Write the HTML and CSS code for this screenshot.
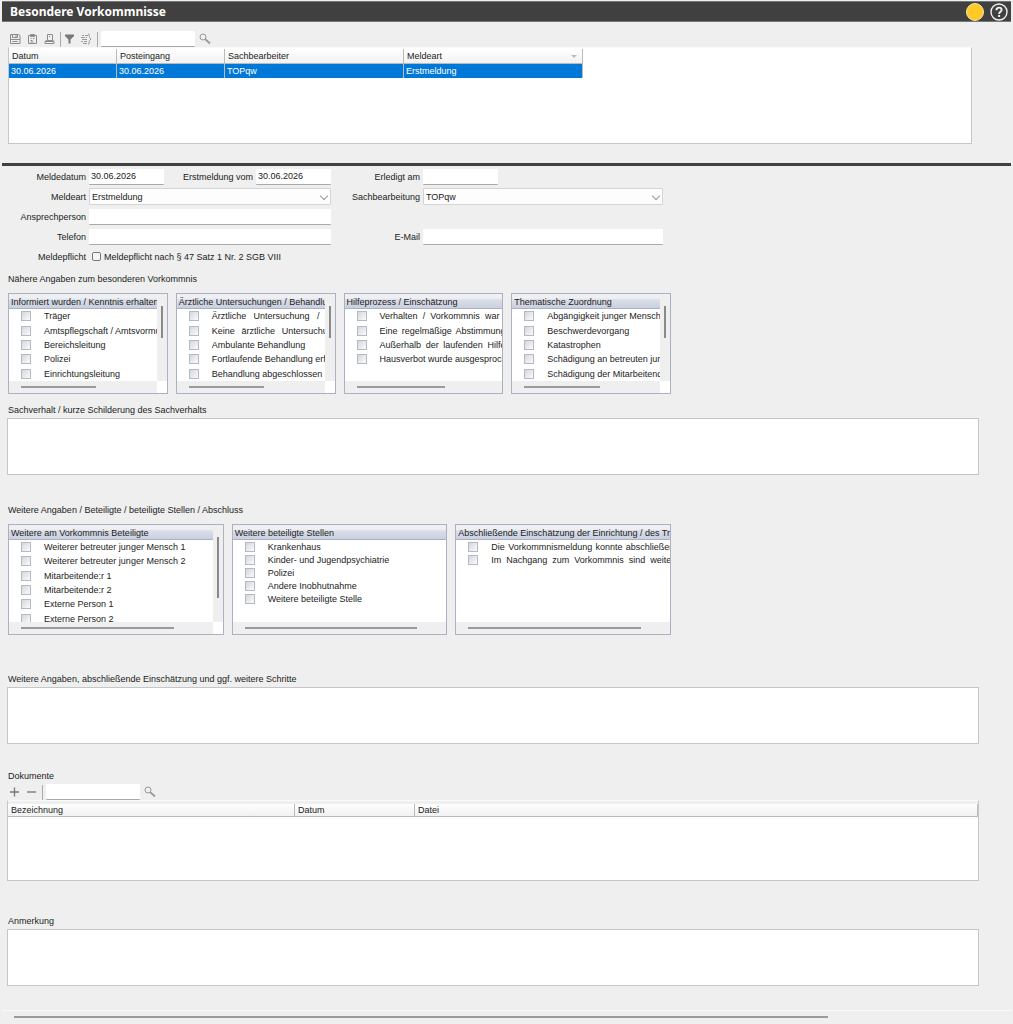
FILE: index.html
```html
<!DOCTYPE html>
<html lang="de">
<head>
    <meta charset="UTF-8">
    <meta name="viewport" content="width=device-width, initial-scale=1.0">
    <title>Besondere Vorkommnisse</title>
    <link rel="stylesheet" href="styles.css">
</head>
<body>
    <header class="titlebar">
        <h1>Besondere Vorkommnisse</h1>
        <span class="status"></span>
        <button class="help" aria-label="Hilfe">
            <svg width="18" height="18" viewBox="0 0 18 18" fill="none" stroke="#efefef">
                <circle cx="9" cy="9" r="8" stroke-width="1.4"/>
                <path d="M6.4 7.2C6.4 5.5 7.5 4.6 9 4.6s2.6.9 2.6 2.3c0 1.8-2.5 1.9-2.5 4" stroke-width="1.9"/>
                <path d="M9.1 12v2" stroke-width="2"/>
            </svg>
        </button>
    </header>

    <section class="overview">
        <div class="toolbar">
            <button class="tool" aria-label="Speichern">
                <svg width="11" height="12" viewBox="0 0 11 12" fill="none" stroke="#8c8c8c"><path d="M.5 1.5h8l1.500 1v8H.5zM2.500 2v2.500h5V2M.5 6.500h9.500M2.500 8.500h5"/><path d="M6 2v2"/></svg>
            </button>
            <button class="tool" aria-label="Einfügen">
                <svg width="11" height="12" viewBox="0 0 11 12" fill="none" stroke="#8c8c8c"><path d="M1.5 2.5h8v8h-8z"/><path d="M3.5 1.5h4v2h-4zM3.5 5.5h1M6 5.5h1.5M3.5 7.5h2M3.5 9h3"/></svg>
            </button>
            <button class="tool" aria-label="Drucken">
                <svg width="11" height="12" viewBox="0 0 11 12" fill="none" stroke="#8c8c8c"><path d="M3.5 7.5v-6h5v6zM3.5 7L1 8.5v2h9v-2L8.500 7M1 8.500h9M5 3.500h1"/></svg>
            </button>
            <span class="separator"></span>
            <button class="tool" aria-label="Filter">
                <svg width="11" height="12" viewBox="0 0 11 12" fill="#777"><path d="M1 1.5h9V3L6.5 6.5v4h-2v-4L1 3z"/></svg>
            </button>
            <button class="tool" aria-label="Filter anpassen">
                <svg width="11" height="12" viewBox="0 0 11 12" fill="none" stroke="#999"><path d="M1 2.5h2M4 2.5h3M0 4.5h4M5 4.5h1M1 6.5h5M0 8.5h2M3 8.5h3M2 10.5h4M7 1c2 0 1 2 1.5 3.5L10 6 8.5 7.5C8 9 9 11 7 11"/></svg>
            </button>
            <span class="separator"></span>
            <input type="text" class="search" aria-label="Suche">
            <button class="tool" aria-label="Suchen">
                <svg width="12" height="12" viewBox="0 0 12 12" fill="none" stroke="#999"><circle cx="4" cy="4" r="3"/><path d="M6 6l5 4.5" stroke-width="1.8"/></svg>
            </button>
        </div>
        <div class="table-box reports">
            <table>
                <colgroup>
                    <col class="col-date"><col class="col-date"><col class="col-wide"><col class="col-wide">
                </colgroup>
                <thead>
                    <tr><th>Datum</th><th>Posteingang</th><th>Sachbearbeiter</th><th class="sorted">Meldeart</th></tr>
                </thead>
                <tbody>
                    <tr class="selected"><td>30.06.2026</td><td>30.06.2026</td><td>TOPqw</td><td>Erstmeldung</td></tr>
                </tbody>
            </table>
        </div>
    </section>

    <main>
        <form class="details">
            <label for="meldedatum">Meldedatum</label>
            <div class="dates">
                <input type="text" id="meldedatum" class="date" value="30.06.2026">
                <label for="erstmeldung">Erstmeldung vom</label>
                <input type="text" id="erstmeldung" class="date" value="30.06.2026">
            </div>
            <label for="erledigt">Erledigt am</label>
            <input type="text" id="erledigt" class="date">

            <label for="meldeart">Meldeart</label>
            <div class="select">
                <select id="meldeart"><option>Erstmeldung</option></select>
            </div>
            <label for="bearbeitung">Sachbearbeitung</label>
            <div class="select">
                <select id="bearbeitung"><option>TOPqw</option></select>
            </div>

            <label for="person">Ansprechperson</label>
            <input type="text" id="person">

            <label for="telefon" class="first">Telefon</label>
            <input type="text" id="telefon">
            <label for="email">E-Mail</label>
            <input type="text" id="email">

            <span class="first">Meldepflicht</span>
            <label class="duty"><input type="checkbox">Meldepflicht nach § 47 Satz 1 Nr. 2 SGB VIII</label>
        </form>

        <h2>Nähere Angaben zum besonderen Vorkommnis</h2>
        <div class="panels four">
            <section class="panel">
                <div class="panel-top">
                    <div class="panel-main">
                        <h3>Informiert wurden / Kenntnis erhalten</h3>
                        <div class="checks">
                            <label><input type="checkbox"><span>Träger</span></label>
                            <label><input type="checkbox"><span>Amtspflegschaft / Amtsvormund</span></label>
                            <label><input type="checkbox"><span>Bereichsleitung</span></label>
                            <label><input type="checkbox"><span>Polizei</span></label>
                            <label><input type="checkbox"><span>Einrichtungsleitung</span></label>
                        </div>
                    </div>
                    <div class="vbar"><i></i></div>
                </div>
                <div class="hbar corner"><i></i></div>
            </section>
            <section class="panel">
                <div class="panel-top">
                    <div class="panel-main">
                        <h3>Ärztliche Untersuchungen / Behandlung</h3>
                        <div class="checks">
                            <label><input type="checkbox"><span class="block">Ärztliche Untersuchung / Be</span></label>
                            <label><input type="checkbox"><span class="block">Keine ärztliche Untersuchung</span></label>
                            <label><input type="checkbox"><span>Ambulante Behandlung</span></label>
                            <label><input type="checkbox"><span>Fortlaufende Behandlung erfolgt</span></label>
                            <label><input type="checkbox"><span>Behandlung abgeschlossen</span></label>
                        </div>
                    </div>
                    <div class="vbar"><i></i></div>
                </div>
                <div class="hbar corner"><i></i></div>
            </section>
            <section class="panel">
                <div class="panel-top">
                    <div class="panel-main">
                        <h3>Hilfeprozess / Einschätzung</h3>
                        <div class="checks">
                            <label><input type="checkbox"><span class="block short">Verhalten / Vorkommnis war</span></label>
                            <label><input type="checkbox"><span class="block">Eine regelmäßige Abstimmung</span></label>
                            <label><input type="checkbox"><span class="block">Außerhalb der laufenden Hilfe</span></label>
                            <label><input type="checkbox"><span>Hausverbot wurde ausgesprochen</span></label>
                        </div>
                    </div>
                </div>
                <div class="hbar"><i></i></div>
            </section>
            <section class="panel">
                <div class="panel-top">
                    <div class="panel-main">
                        <h3>Thematische Zuordnung</h3>
                        <div class="checks">
                            <label><input type="checkbox"><span>Abgängigkeit junger Menschen</span></label>
                            <label><input type="checkbox"><span>Beschwerdevorgang</span></label>
                            <label><input type="checkbox"><span>Katastrophen</span></label>
                            <label><input type="checkbox"><span>Schädigung an betreuten jungen</span></label>
                            <label><input type="checkbox"><span>Schädigung der Mitarbeitenden</span></label>
                        </div>
                    </div>
                    <div class="vbar"><i></i></div>
                </div>
                <div class="hbar corner"><i></i></div>
            </section>
        </div>

        <label class="caption" for="sachverhalt">Sachverhalt / kurze Schilderung des Sachverhalts</label>
        <textarea id="sachverhalt"></textarea>

        <h2 class="spaced">Weitere Angaben / Beteiligte / beteiligte Stellen / Abschluss</h2>
        <div class="panels three">
            <section class="panel">
                <div class="panel-top">
                    <div class="panel-main">
                        <h3>Weitere am Vorkommnis Beteiligte</h3>
                        <div class="checks six">
                            <label><input type="checkbox"><span>Weiterer betreuter junger Mensch 1</span></label>
                            <label><input type="checkbox"><span>Weiterer betreuter junger Mensch 2</span></label>
                            <label><input type="checkbox"><span>Mitarbeitende:r 1</span></label>
                            <label><input type="checkbox"><span>Mitarbeitende:r 2</span></label>
                            <label><input type="checkbox"><span>Externe Person 1</span></label>
                            <label><input type="checkbox"><span>Externe Person 2</span></label>
                        </div>
                    </div>
                    <div class="vbar"><i></i></div>
                </div>
                <div class="hbar corner"><i></i></div>
            </section>
            <section class="panel">
                <div class="panel-top">
                    <div class="panel-main">
                        <h3>Weitere beteiligte Stellen</h3>
                        <div class="checks dense">
                            <label><input type="checkbox"><span>Krankenhaus</span></label>
                            <label><input type="checkbox"><span>Kinder- und Jugendpsychiatrie</span></label>
                            <label><input type="checkbox"><span>Polizei</span></label>
                            <label><input type="checkbox"><span>Andere Inobhutnahme</span></label>
                            <label><input type="checkbox"><span>Weitere beteiligte Stelle</span></label>
                        </div>
                    </div>
                </div>
                <div class="hbar"><i></i></div>
            </section>
            <section class="panel">
                <div class="panel-top">
                    <div class="panel-main">
                        <h3>Abschließende Einschätzung der Einrichtung / des Trägers</h3>
                        <div class="checks dense">
                            <label><input type="checkbox"><span class="block long">Die Vorkommnismeldung konnte abschließend</span></label>
                            <label><input type="checkbox"><span class="block long">Im Nachgang zum Vorkommnis sind weitere</span></label>
                        </div>
                    </div>
                </div>
                <div class="hbar"><i></i></div>
            </section>
        </div>

        <label class="caption spaced" for="weitere">Weitere Angaben, abschließende Einschätzung und ggf. weitere Schritte</label>
        <textarea id="weitere"></textarea>

        <h2 class="documents-title">Dokumente</h2>
        <div class="toolbar">
            <button class="tool" aria-label="Hinzufügen">
                <svg width="11" height="12" viewBox="0 0 11 12" stroke="#777" stroke-width="1.3"><path d="M1 6h9M5.5 1.5v9"/></svg>
            </button>
            <button class="tool" aria-label="Entfernen">
                <svg width="11" height="12" viewBox="0 0 11 12" stroke="#777" stroke-width="1.3"><path d="M1 6h9"/></svg>
            </button>
            <span class="separator"></span>
            <input type="text" class="search" aria-label="Dokumente suchen">
            <button class="tool" aria-label="Suchen">
                <svg width="12" height="12" viewBox="0 0 12 12" fill="none" stroke="#999"><circle cx="4" cy="4" r="3"/><path d="M6 6l5 4.5" stroke-width="1.8"/></svg>
            </button>
        </div>
        <div class="table-box documents">
            <table>
                <colgroup>
                    <col class="col-name"><col class="col-day"><col>
                </colgroup>
                <thead>
                    <tr><th>Bezeichnung</th><th>Datum</th><th>Datei</th></tr>
                </thead>
            </table>
        </div>

        <label class="caption remark" for="anmerkung">Anmerkung</label>
        <textarea id="anmerkung"></textarea>
    </main>

    <footer class="page-scroll"><i></i></footer>
</body>
</html>
```
FILE: styles.css
```css
* {
    box-sizing: border-box;
}

body {
    margin: 0;
    padding: 1px 2px 0;
    background-color: #efefef;
    color: #222;
    font-family: "Liberation Sans", Arial, sans-serif;
    font-size: 9px;
    line-height: 12px;
}

input, select, textarea, button {
    font: inherit;
    color: inherit;
}

h2, h3 {
    margin: 0;
    font-size: 9px;
    font-weight: normal;
}

/* title bar */
.titlebar {
    display: flex;
    align-items: center;
    gap: 6px;
    height: 21px;
    padding: 0 3px 0 8px;
    background-color: #404040;
    border: 1px solid #777;
    border-width: 1px 0;
}

.titlebar h1 {
    flex: 1;
    margin: 0;
    color: #fff;
    font: bold 12px "Noto Sans", sans-serif;
}

.status {
    width: 18px;
    height: 18px;
    border: 1px solid #f5e6b0;
    border-radius: 50%;
    background-color: #ffca28;
}

.help {
    display: flex;
    padding: 0;
    border: none;
    background: none;
}

/* toolbars */
.toolbar {
    display: flex;
    align-items: center;
    gap: 4px;
    height: 16px;
    padding-left: 2px;
}

.tool {
    display: flex;
    padding: 0;
    margin-right: 2px;
    border: none;
    background: none;
}

.separator {
    width: 1px;
    height: 15px;
    margin: 0 -1px;
    background-color: #aaa;
}

.search {
    width: 94px;
}

input[type="text"] {
    height: 16px;
    padding: 0 2px;
    border: none;
    border-bottom: 1px solid #aaa;
    border-radius: 1px;
    background-color: #fff;
}

/* tables */
.overview {
    padding: 9px 39px 19px 6px;
    border-bottom: 3px solid #404040;
}

.table-box {
    background-color: #fff;
    border: 1px solid #c4c6ca;
    border-top-color: #fafafa;
}

.reports {
    height: 97px;
    padding-top: 1px;
}

.documents {
    height: 81px;
    padding-top: 3px;
    background: linear-gradient(#efefef 3px, #fff 3px);
}

table {
    border-spacing: 0;
    table-layout: fixed;
    width: 574px;
}

.documents table {
    width: 100%;
}

.col-date {
    width: 108px;
}

.col-wide {
    width: 179px;
}

.col-name {
    width: 287px;
}

.col-day {
    width: 120px;
}

th, td {
    height: 14px;
    padding: 0 3px;
    border-right: 1px solid #bbb;
    text-align: left;
    font-weight: normal;
}

td {
    padding-left: 2px;
}

th {
    height: 15px;
    background: linear-gradient(#fff, #f1f1f1);
    border-bottom: 1px solid #bbb;
}

.documents th {
    height: 13px;
}

.selected {
    background-color: #0078d7;
    color: #fff;
}

.sorted::after {
    content: "";
    float: right;
    margin: 5px 2px 0 0;
    border: 3px solid transparent;
    border-top-color: #bbb;
    border-bottom: none;
}

/* form */
main {
    padding: 2px 32px 0 5px;
}

.details {
    display: grid;
    grid-template-columns: 79px 242px 86px 240px;
    grid-auto-rows: 17px;
    gap: 3px;
    align-items: center;
}

.details > label, .first {
    text-align: right;
}

.first {
    grid-column: 1;
}

.dates {
    display: flex;
    align-items: center;
    justify-content: space-between;
}

.dates label {
    flex: 1;
    padding-right: 3px;
    text-align: right;
}

.details .date {
    width: 75px;
}

.select {
    position: relative;
    display: flex;
}

.select::after {
    content: "";
    position: absolute;
    right: 4px;
    top: 5px;
    width: 5px;
    height: 5px;
    border: solid #999;
    border-width: 0 1px 1px 0;
    transform: rotate(45deg);
    pointer-events: none;
}

select {
    appearance: none;
    width: 100%;
    height: 17px;
    padding: 0 2px;
    border: 1px solid #d4d4d4;
    border-radius: 1px;
    background-color: #fdfdfd;
}

.details .duty {
    display: flex;
    align-items: center;
    gap: 3px;
    white-space: nowrap;
}

input[type="checkbox"] {
    appearance: none;
    flex: none;
    width: 10px;
    height: 10px;
    margin: 0;
    border: 1px solid #b4b9c4;
    background: linear-gradient(135deg, #d4d7dd, #fbfbfb);
}

.duty input[type="checkbox"] {
    width: 9px;
    height: 9px;
    margin-left: 3px;
    border-color: #777;
    border-radius: 2px;
    background: #f6f6f6;
}

h2, .caption {
    display: block;
    padding-left: 1px;
}

h2 {
    margin: 8px 0;
}

/* check list panels */
.panels {
    display: grid;
    gap: 8px;
    max-width: 664px;
    padding-left: 1px;
}

.four {
    grid-template-columns: repeat(4, 1fr);
}

.three {
    grid-template-columns: repeat(3, 1fr);
}

.panel {
    display: flex;
    flex-direction: column;
    min-width: 0;
    height: 101px;
    border: 1px solid #a9b1c2;
    background-color: #fff;
}

.three .panel {
    height: 111px;
}

.panel-top {
    display: flex;
    flex: 1;
    min-height: 0;
}

.panel-main {
    flex: 1;
    min-width: 0;
    overflow: hidden;
}

.panel h3 {
    height: 15px;
    padding: 2px 0 0 2px;
    overflow: hidden;
    white-space: nowrap;
    background: linear-gradient(#eff0f3 4px, #dadee8 6px, #c9d0de);
    border-bottom: 1px solid #a9b1c2;
}

.checks {
    display: grid;
    grid-template-rows: repeat(5, 1fr);
    height: 72px;
}

.checks.six {
    grid-template-rows: repeat(6, 1fr);
    height: 86px;
}

.checks.dense {
    grid-template-rows: none;
    grid-auto-rows: 13px;
    height: auto;
}

.checks label {
    display: flex;
    align-items: center;
    gap: 13px;
    padding-left: 12px;
    white-space: nowrap;
}

.block {
    flex: none;
    width: 126px;
    text-align-last: justify;
}

.block.short {
    width: 120px;
}

.block.long {
    width: 188px;
}

.vbar {
    width: 10px;
    padding: 12px 4px 0;
    background-color: #efefef;
}

.vbar i {
    display: block;
    width: 2px;
    height: 42%;
    background-color: #8a8a8a;
}

.three .vbar i {
    height: 72%;
}

.hbar {
    height: 12px;
    padding: 5px 12px 0;
    background-color: #efefef;
}

.hbar i {
    display: block;
    width: 66%;
    height: 2px;
    background-color: #9a9a9a;
}

.three .hbar i {
    width: 91%;
}

.corner {
    margin-right: 10px;
}

.four .corner i {
    width: 61%;
}

.three .corner i {
    width: 85%;
}

/* text areas */
.caption {
    margin: 10px 0 2px;
}

textarea {
    display: block;
    width: 100%;
    height: 57px;
    border: 1px solid #c4c6ca;
    background-color: #fff;
    resize: none;
}

h2.spaced {
    margin-top: 29px;
}

.caption.spaced {
    margin-top: 38px;
}

.documents-title {
    margin: 26px 0 2px;
}

.caption.remark {
    margin-top: 34px;
}

.page-scroll {
    margin-top: 24px;
    padding: 5px 16px 5px 12px;
    border-top: 1px solid #fafafa;
}

.page-scroll i {
    display: block;
    width: 83%;
    height: 2px;
    background-color: #9a9a9a;
}
```
